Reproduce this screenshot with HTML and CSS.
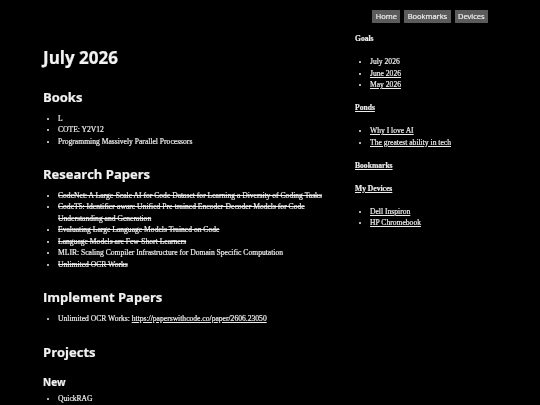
FILE: index.html
```html
<!DOCTYPE html>
<html lang="en">
<head>
<meta charset="utf-8">
<title>July 2026</title>
<link rel="stylesheet" href="styles.css">
</head>
<body>
<div class="page">
<nav class="topnav">
  <a class="navbtn" href="#">Home</a>
  <a class="navbtn" href="#">Bookmarks</a>
  <a class="navbtn" href="#">Devices</a>
</nav>
<div class="layout">
  <main class="main">
    <h1 class="title">July 2026</h1>

    <h2 class="section">Books</h2>
    <ul class="list">
      <li>L</li>
      <li>COTE: Y2V12</li>
      <li>Programming Massively Parallel Processors</li>
    </ul>

    <h2 class="section">Research Papers</h2>
    <ul class="list">
      <li class="done">CodeNet: A Large-Scale AI for Code Dataset for Learning a Diversity of Coding Tasks</li>
      <li class="done">CodeT5: Identifier-aware Unified Pre-trained Encoder-Decoder Models for Code Understanding and Generation</li>
      <li class="done">Evaluating Large Language Models Trained on Code</li>
      <li class="done">Language Models are Few-Short Learners</li>
      <li>MLIR: Scaling Compiler Infrastructure for Domain Specific Computation</li>
      <li class="done">Unlimited OCR Works</li>
    </ul>

    <h2 class="section">Implement Papers</h2>
    <ul class="list">
      <li>Unlimited OCR Works: <a class="link" href="#">https://paperswithcode.co/paper/2606.23050</a></li>
    </ul>

    <h2 class="section">Projects</h2>
    <h3 class="subsection">New</h3>
    <ul class="list">
      <li>QuickRAG</li>
    </ul>
  </main>

  <aside class="sidebar">
    <h4 class="side-head">Goals</h4>
    <ul class="list side-list">
      <li>July 2026</li>
      <li><a class="link" href="#">June 2026</a></li>
      <li><a class="link" href="#">May 2026</a></li>
    </ul>
    <h4 class="side-head"><a class="link" href="#">Ponds</a></h4>
    <ul class="list side-list">
      <li><a class="link" href="#">Why I love AI</a></li>
      <li><a class="link" href="#">The greatest ability in tech</a></li>
    </ul>
    <h4 class="side-head"><a class="link" href="#">Bookmarks</a></h4>
    <h4 class="side-head"><a class="link" href="#">My Devices</a></h4>
    <ul class="list side-list">
      <li><a class="link" href="#">Dell Inspiron</a></li>
      <li><a class="link" href="#">HP Chromebook</a></li>
    </ul>
  </aside>
</div>
</div>
</body>
</html>
```

FILE: styles.css
```css
html, body {
  margin: 0;
  padding: 0;
  background: #000;
}

body {
  color: #ededed;
  font-family: "Liberation Serif", "Times New Roman", serif;
  font-size: 7.6px;
  line-height: 11.5px;
  overflow: hidden;
  height: 405px;
}

.page {
  height: 405px;
  background: #000;
  filter: grayscale(100%);
  -webkit-text-stroke: 0.2px currentColor;
}

.topnav {
  display: flex;
  justify-content: flex-end;
  gap: 4px;
  padding: 10px 52px 0 0;
}

.navbtn {
  display: block;
  background: #5f5a5c;
  color: #f2f2f2;
  font-family: "Open Sans", "Noto Sans", sans-serif;
  font-size: 7.5px;
  line-height: 13px;
  padding: 0 3.4px;
  text-decoration: none;
}

.layout {
  display: flex;
  align-items: flex-start;
  gap: 15px;
  padding: 0 52px 0 43px;
}

.main {
  width: 297px;
  flex: none;
}

.sidebar {
  flex: 1;
  padding-top: 10px;
}

.title {
  font-family: "Open Sans", "Noto Sans", sans-serif;
  font-weight: 700;
  font-size: 17px;
  line-height: 24px;
  color: #f2f2f2;
  margin: 23px 0 0;
}

.section {
  font-family: "Open Sans", "Noto Sans", sans-serif;
  font-weight: 700;
  font-size: 13px;
  line-height: 18px;
  color: #f2f2f2;
  margin: 18px 0 6.7px;
}

.subsection {
  font-family: "Open Sans", "Noto Sans", sans-serif;
  font-weight: 700;
  font-size: 10px;
  line-height: 14px;
  color: #f2f2f2;
  margin: 14.6px 0 3.6px;
}

.list {
  margin: 0;
  padding-left: 15px;
  list-style: disc;
}

.done {
  text-decoration: line-through;
}

.link {
  color: inherit;
  text-decoration: underline;
}

.side-head {
  font-size: 7.6px;
  line-height: 11.5px;
  font-weight: 700;
  margin: 0 0 11.5px;
}

.side-list {
  margin: 0 0 11.5px;
}
```
